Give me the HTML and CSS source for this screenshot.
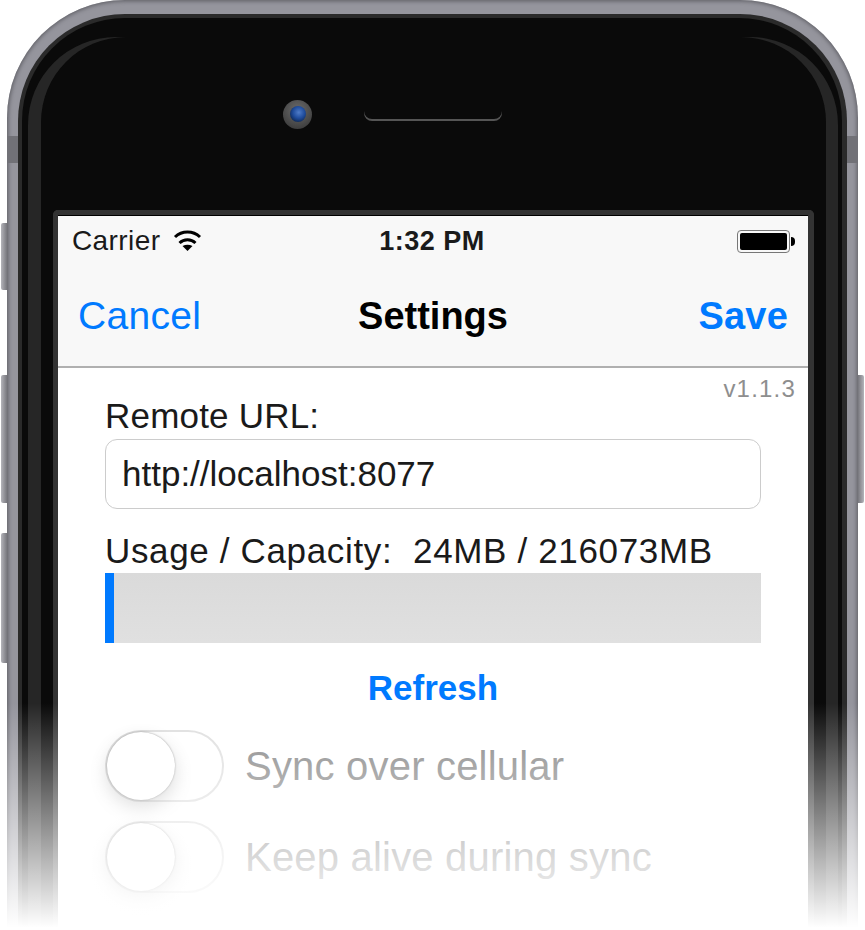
FILE: index.html
```html
<!DOCTYPE html>
<html lang="en">
  <head>
    <meta charset="UTF-8" />
    <meta name="viewport" content="width=device-width, initial-scale=1.0" />
    <title>Settings</title>
    <link rel="stylesheet" href="styles.css">
  </head>
  <body>
    <div class="device">
      <div class="side-btn btn-mute"></div>
      <div class="side-btn btn-up"></div>
      <div class="side-btn btn-down"></div>
      <div class="side-btn btn-power"></div>

      <div class="phone">
        <div class="band band-left"></div>
        <div class="band band-right"></div>
        <div class="phone-rim">
          <div class="phone-face">
            <div class="bezel">
              <div class="bezel-inner">
                <div class="sensors">
                  <div class="camera"><div class="lens"></div></div>
                  <div class="speaker"></div>
                </div>

                <div class="screen">
                  <div class="status-bar">
                    <div class="status-left">
                      <span class="carrier">Carrier</span>
                      <svg class="wifi" width="29" height="21" viewBox="0 0 29 21">
                        <path d="M2 7 A18 18 0 0 1 27 7" fill="none" stroke="#000" stroke-width="3" />
                        <path d="M6.5 13 A11.5 11.5 0 0 1 22.5 13" fill="none" stroke="#000" stroke-width="3" />
                        <path d="M14.5 21 L9.5 16 Q14.5 13.5 19.5 16 Z" fill="#000" />
                      </svg>
                    </div>
                    <div class="status-time">1:32 PM</div>
                    <div class="status-right">
                      <div class="battery"><div class="battery-level"></div></div>
                      <div class="battery-nub"></div>
                    </div>
                  </div>

                  <div class="nav-bar">
                    <a class="nav-cancel">Cancel</a>
                    <div class="nav-title">Settings</div>
                    <a class="nav-save">Save</a>
                  </div>

                  <div class="content">
                    <div class="version">v1.1.3</div>
                    <label class="field-label">Remote URL:</label>
                    <input class="url-input" type="text" value="http://localhost:8077" />
                    <div class="usage-label">Usage / Capacity:&nbsp; 24MB / 216073MB</div>
                    <div class="progress"><div class="progress-fill"></div></div>
                    <div class="refresh">Refresh</div>
                    <div class="toggle-row">
                      <div class="toggle"><div class="knob"></div></div>
                      <span class="toggle-label">Sync over cellular</span>
                    </div>
                    <div class="toggle-row second">
                      <div class="toggle"><div class="knob"></div></div>
                      <span class="toggle-label">Keep alive during sync</span>
                    </div>
                  </div>
                </div>
              </div>
            </div>
          </div>
        </div>
      </div>

      <div class="fade"></div>
    </div>
  </body>
</html>
```

FILE: styles.css
```css
* {
  box-sizing: border-box;
}
html,
body {
  margin: 0;
  background: #fff;
}
body {
  font-family: "Liberation Sans", Arial, sans-serif;
  color: #1a1a1a;
}
.device {
  position: relative;
  width: 865px;
  height: 930px;
  overflow: hidden;
}

/* hardware */
.phone {
  position: relative;
  margin-left: 7px;
  width: 851px;
  height: 1100px;
  padding: 14px 11px 0;
  border-radius: 118px;
  background: #95959d;
  box-shadow: inset 0 0 4px 1px #5a5a60;
}
.band {
  position: absolute;
  top: 136px;
  width: 11px;
  height: 27px;
  background: #717177;
}
.band-left {
  left: 0;
}
.band-right {
  right: 0;
}
.side-btn {
  position: absolute;
  left: 1px;
  width: 6px;
  background: linear-gradient(90deg, #b4b4ba, #77777d);
  border-radius: 2px 0 0 2px;
}
.btn-mute {
  top: 223px;
  height: 67px;
}
.btn-up {
  top: 375px;
  height: 128px;
}
.btn-down {
  top: 533px;
  height: 130px;
}
.btn-power {
  top: 375px;
  left: 858px;
  height: 128px;
  background: linear-gradient(90deg, #77777d, #b4b4ba);
  border-radius: 0 2px 2px 0;
}
.phone-rim {
  height: 100%;
  padding: 4px 5px 0 4px;
  border-radius: 107px;
  background: #2a2a2a;
}
.phone-face {
  height: 100%;
  padding: 19px 4px 0 6px;
  border-radius: 103px;
  background: #0a0a0a;
}
.bezel {
  height: 100%;
  padding: 0 12px 0 13px;
  border-radius: 88px;
  background: #262626;
}
.bezel-inner {
  height: 100%;
  padding: 0 12px;
  border-radius: 85px;
  background: #0a0a0a;
}
.sensors {
  display: flex;
  align-items: center;
  gap: 52px;
  height: 173px;
  padding: 0 0 19px 230px;
}
.camera {
  display: flex;
  align-items: center;
  justify-content: center;
  width: 29px;
  height: 29px;
  border-radius: 50%;
  background: radial-gradient(circle at 50% 35%, #6c6c6c, #404040 75%, #2c2c2c);
}
.lens {
  width: 16px;
  height: 16px;
  border-radius: 50%;
  background: radial-gradient(circle at 55% 40%, #4f7cc8, #1f4c9c 45%, #0b1d3a 90%);
}
.speaker {
  width: 138px;
  height: 13px;
  border-radius: 0 0 8px 8px;
  box-shadow: inset 0 -2px 0 #555;
}

/* screen */
.screen {
  height: 800px;
  border-style: solid;
  border-width: 5px 6px 0 5px;
  border-color: #333;
  border-radius: 5px 5px 0 0;
  background: #fff;
}
.status-bar {
  display: grid;
  grid-template-columns: 1fr auto 1fr;
  align-items: center;
  height: 51px;
  padding: 0 13px 0 14px;
  border-top: 1px solid #000;
  background: #f8f8f8;
  font-size: 28px;
}
.status-left {
  display: flex;
  align-items: center;
  gap: 13px;
}
.carrier {
  letter-spacing: 0.4px;
}
.wifi {
  margin-top: -2px;
}
.status-time {
  margin-left: -3px;
  font-weight: bold;
  font-size: 27px;
  letter-spacing: 0.5px;
}
.status-right {
  display: flex;
  align-items: center;
  justify-content: flex-end;
}
.battery {
  width: 53px;
  height: 23px;
  padding: 2px;
  border: 1px solid #777;
  border-radius: 4px;
}
.battery-level {
  height: 100%;
  background: #000;
  border-radius: 2px;
}
.battery-nub {
  width: 4px;
  height: 9px;
  margin-left: 1px;
  background: #000;
  border-radius: 0 4px 4px 0;
}
.nav-bar {
  display: grid;
  grid-template-columns: 1fr auto 1fr;
  align-items: center;
  height: 102px;
  padding: 0 20px;
  border-bottom: 2px solid #b0b0b0;
  background: #f8f8f8;
  font-size: 38px;
}
.nav-cancel {
  color: #007aff;
  font-size: 39px;
  letter-spacing: 0.3px;
}
.nav-title {
  font-weight: bold;
  color: #000;
}
.nav-save {
  color: #007aff;
  font-weight: bold;
  text-align: right;
  letter-spacing: 0.2px;
}

/* settings form */
.content {
  padding: 10px 47px 0;
  font-size: 35px;
}
.version {
  height: 22px;
  margin-right: -35px;
  line-height: 22px;
  font-size: 24px;
  letter-spacing: 1.2px;
  text-align: right;
  color: #8e8e8e;
}
.field-label {
  display: block;
  height: 32px;
  line-height: 32px;
  margin-bottom: 7px;
  letter-spacing: 0.2px;
}
.url-input {
  display: block;
  width: 100%;
  height: 70px;
  padding: 0 16px;
  border: 1px solid #ccc;
  border-radius: 12px;
  background: #fff;
  font-family: inherit;
  font-size: 35px;
  color: #1a1a1a;
}
.usage-label {
  height: 40px;
  margin-top: 22px;
  margin-bottom: 2px;
  line-height: 40px;
  letter-spacing: 0.65px;
}
.progress {
  height: 70px;
  background: linear-gradient(#dadada, #e0e0e0);
}
.progress-fill {
  width: 9px;
  height: 100%;
  background: #007aff;
}
.refresh {
  height: 50px;
  margin-top: 20px;
  line-height: 50px;
  font-weight: bold;
  text-align: center;
  color: #007aff;
}
.toggle-row {
  display: flex;
  align-items: center;
  gap: 21px;
  margin-top: 17px;
}
.toggle-row.second {
  margin-top: 19px;
}
.toggle {
  width: 119px;
  height: 72px;
  border: 2px solid #dedede;
  border-radius: 36px;
  background: #fff;
}
.knob {
  width: 68px;
  height: 68px;
  border-radius: 50%;
  background: #fff;
  box-shadow: 0 0 2px rgba(0, 0, 0, 0.45), 0 8px 18px rgba(0, 0, 0, 0.2);
}
.toggle-label {
  font-size: 40px;
  letter-spacing: 0.2px;
  color: #858585;
}

/* phone dissolves into the page at the bottom */
.fade {
  position: absolute;
  left: 0;
  right: 0;
  top: 703px;
  height: 227px;
  background: linear-gradient(rgba(255, 255, 255, 0), #fff 99%);
}
```
